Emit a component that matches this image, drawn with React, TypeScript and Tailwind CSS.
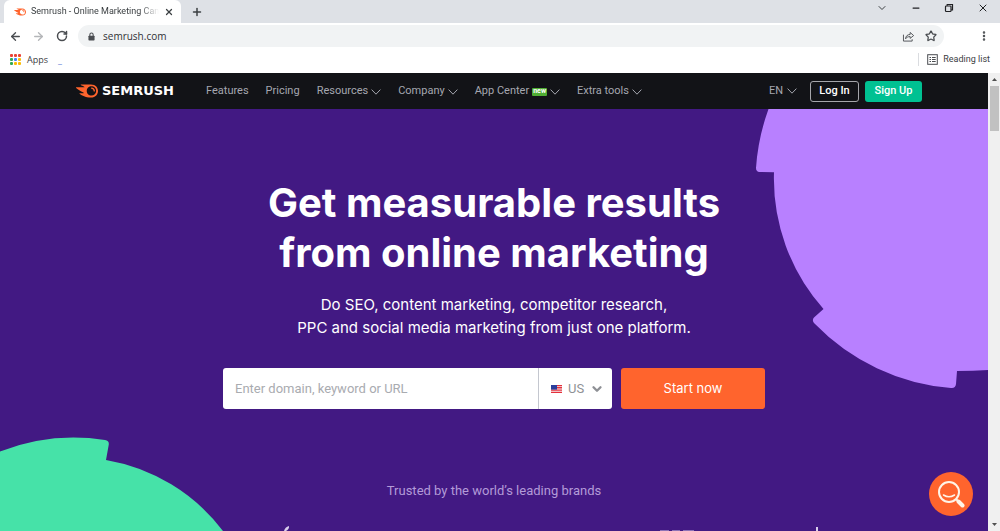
import {
  ArrowLeft,
  ArrowRight,
  ChevronDown,
  EllipsisVertical,
  Minus,
  Plus,
  RotateCw,
  Star,
  X,
} from "lucide-react";
import { SiSemrush } from "react-icons/si";

const navLinks = [
  { href: "#features", label: "Features" },
  { href: "#pricing", label: "Pricing" },
  { href: "#resources", label: "Resources", menu: true },
  { href: "#company", label: "Company", menu: true },
  { href: "#apps", label: "App Center", menu: true, isNew: true },
  { href: "#tools", label: "Extra tools", menu: true },
];

const appDots = [
  "bg-[#ea4335]", "bg-[#ea4335]", "bg-[#ea4335]",
  "bg-[#34a853]", "bg-[#4285f4]", "bg-[#fbbc05]",
  "bg-[#34a853]", "bg-[#fbbc05]", "bg-[#fbbc05]",
];

function Caret() {
  return (
    <svg viewBox="0 0 10 6" className="h-[6px] w-[10px]" fill="none" stroke="currentColor">
      <path d="M.6.6 5 5.2 9.4.6" />
    </svg>
  );
}

function TabStrip() {
  return (
    <div className="flex h-[23px] items-end justify-between bg-[#dee1e6]">
      <div className="flex h-full items-center">
        <div className="ml-1 flex h-full w-[177px] items-center rounded-t-md bg-white pr-2 pl-[10px]">
          <SiSemrush className="h-3 w-3 shrink-0 text-[#ff642d]" />
          <span className="ml-[5px] w-[129px] mask-r-from-85% font-['Roboto',sans-serif] text-[9px] whitespace-nowrap text-[#3c4043]">
            Semrush - Online Marketing Can
          </span>
          <button type="button" aria-label="Close tab" className="ml-[5px]">
            <X className="h-[10px] w-[10px] text-[#3c4043]" strokeWidth={3} />
          </button>
        </div>
        <button type="button" aria-label="New tab" className="ml-[10px]">
          <Plus className="h-3 w-3 text-[#3c4043]" strokeWidth={3} />
        </button>
      </div>
      <div className="flex h-4 items-center gap-[23px] self-start pr-[11px] text-[#202124]">
        <button type="button" aria-label="Search tabs">
          <ChevronDown className="h-3 w-3 text-[#3c4043]" />
        </button>
        <button type="button" aria-label="Minimize">
          <Minus className="h-[10px] w-[10px]" strokeWidth={3} />
        </button>
        <button type="button" aria-label="Restore">
          <svg viewBox="0 0 10 10" className="h-[10px] w-[10px]" fill="none" stroke="currentColor" strokeWidth="1.2">
            <rect x="1.5" y="3" width="5.5" height="5.5" rx=".8" />
            <path d="M3.2 2.8V1.5h5.3v5.3H7.2" />
          </svg>
        </button>
        <button type="button" aria-label="Close window">
          <X className="h-3 w-3 text-[#202124]" />
        </button>
      </div>
    </div>
  );
}

function Toolbar() {
  return (
    <div className="flex h-[26px] items-center bg-white pr-[10px] pl-[9px] text-[#4a4d51]">
      <button type="button" aria-label="Back">
        <ArrowLeft className="h-[13px] w-[13px]" strokeWidth={2.5} />
      </button>
      <button type="button" aria-label="Forward" className="ml-[10px] text-[#b4b6b9]">
        <ArrowRight className="h-[13px] w-[13px]" strokeWidth={2.5} />
      </button>
      <button type="button" aria-label="Reload" className="ml-[11px]">
        <RotateCw className="h-3 w-3" strokeWidth={3} />
      </button>
      <div className="ml-[10px] flex h-[22px] flex-1 items-center rounded-full bg-[#f1f3f4] pr-[7px] pl-[10px]">
        <svg viewBox="0 0 8 10" className="h-[9px] w-[7px]">
          <rect x=".5" y="4" width="7" height="5.6" rx=".8" fill="currentColor" />
          <path d="M2.1 4.3V2.9a1.9 1.9 0 0 1 3.8 0v1.4" fill="none" stroke="currentColor" strokeWidth="1.2" />
        </svg>
        <input
          type="text"
          aria-label="Address"
          defaultValue="semrush.com"
          className="ml-2 min-w-0 flex-1 bg-transparent text-[10px] text-[#303134] outline-none"
        />
        <button type="button" aria-label="Share">
          <svg viewBox="0 0 14 12" className="h-[11px] w-[13px]" fill="none" stroke="currentColor">
            <path d="M1.5 4v7h9.5V9" />
            <path d="M3.8 8.5c.2-3 2-4.6 5-4.7V1.6L12.6 5 8.8 8V6.1c-2.2 0-3.8.6-5 2.4Z" strokeLinejoin="round" />
          </svg>
        </button>
        <button type="button" aria-label="Bookmark" className="ml-[10px]">
          <Star className="h-3 w-3" strokeWidth={2.5} />
        </button>
      </div>
      <button type="button" aria-label="Browser menu" className="ml-[34px]">
        <EllipsisVertical className="h-3 w-3" strokeWidth={3} />
      </button>
    </div>
  );
}

function BookmarksBar() {
  return (
    <div className="flex h-6 items-center justify-between bg-white px-[10px] pb-[3px] text-[9px] text-[#3c4043]">
      <div className="flex items-center">
        <a href="#apps-page" className="flex items-center gap-[6px]">
          <span className="grid grid-cols-3 gap-px">
            {appDots.map((color, i) => (
              <span key={i} className={`h-[3px] w-[3px] rounded-[1px] ${color}`} />
            ))}
          </span>
          Apps
        </a>
        <span className="ml-[10px] text-[#5b7fd6]">_</span>
      </div>
      <button type="button" className="flex items-center gap-[5px] border-l border-[#dadce0] pl-2 font-['Roboto',sans-serif]">
        <svg viewBox="0 0 11 11" className="h-[11px] w-[11px]" fill="none" stroke="#4a4d51">
          <rect x=".7" y=".7" width="9.6" height="9.6" />
          <path d="M2.5 3.5H4M5 3.5h3.7M2.5 5.5H4M5 5.5h3.7M2.5 7.5H4M5 7.5h3.7" />
        </svg>
        Reading list
      </button>
    </div>
  );
}

function SiteHeader() {
  return (
    <header className="h-9 shrink-0 bg-[#121317] font-['Roboto',sans-serif] text-[11px] text-[#a5a7b0]">
      <div className="mx-auto flex h-full max-w-[856px] items-center pl-[10px]">
        <a href="#home" className="flex items-center gap-1">
          <SiSemrush className="h-[22px] w-[22px] text-[#ff642d]" />
          <span className="font-['DejaVu_Sans',sans-serif] text-[13px] leading-4 font-bold text-white">
            SEMRUSH
          </span>
        </a>
        <nav className="ml-8 flex items-center gap-[17px] pt-px">
          {navLinks.map(({ href, label, menu, isNew }) => (
            <a key={href} href={href} className="flex items-center whitespace-nowrap hover:text-white">
              {label}
              {isNew && (
                <span className="ml-[3px] h-2 rounded-[1px] bg-[#4fae33] px-[1px] text-[7px] leading-[7px] font-bold text-white">
                  new
                </span>
              )}
              {menu && (
                <span className="ml-[3px]">
                  <Caret />
                </span>
              )}
            </a>
          ))}
        </nav>
        <div className="ml-auto flex items-center">
          <button type="button" className="flex items-center gap-1">
            EN
            <Caret />
          </button>
          <a
            href="#login"
            className="ml-[13px] flex h-[21px] w-[49px] items-center justify-center rounded-[3px] border border-[#a5a6ab] font-medium text-white"
          >
            Log In
          </a>
          <a
            href="#signup"
            className="ml-[6px] flex h-[21px] w-[57px] items-center justify-center rounded-[3px] bg-[#00c192] font-medium text-white"
          >
            Sign Up
          </a>
        </div>
      </div>
    </header>
  );
}

function UsFlag() {
  return (
    <svg viewBox="0 0 11 8" className="h-2 w-[11px]">
      <path fill="#f4f4f4" d="M0 0h11v8H0z" />
      <path stroke="#e5303c" strokeWidth="1.4" d="M0 .5h11M0 2.8h11M0 5.1h11M0 7.4h11" />
      <path fill="#2b3f9c" d="M0 0h6v4.6H0z" />
    </svg>
  );
}

function SearchForm() {
  return (
    <form
      className="mt-[29px] flex w-full max-w-[542px] gap-[9px] font-['Roboto',sans-serif]"
      onSubmit={(e) => e.preventDefault()}
    >
      <div className="flex h-[41px] flex-1 rounded-[3px] bg-white">
        <input
          type="text"
          aria-label="Domain, keyword or URL"
          placeholder="Enter domain, keyword or URL"
          className="min-w-0 flex-1 px-3 text-[13px] text-[#333] outline-none placeholder:text-[#a9abb0]"
        />
        <label className="relative flex w-[74px] items-center border-l border-[#c4c7cf]">
          <span className="pointer-events-none absolute left-3">
            <UsFlag />
          </span>
          <select
            aria-label="Country"
            className="h-full w-full appearance-none pl-[29px] text-[13px] text-[#8e9095] outline-none"
          >
            <option>US</option>
          </select>
          <ChevronDown
            className="pointer-events-none absolute right-2 h-[14px] w-[14px] text-[#8e9095]"
            strokeWidth={4}
          />
        </label>
      </div>
      <button type="submit" className="w-36 rounded-[3px] bg-[#ff642d] font-['Inter',sans-serif] text-[13px] text-white">
        Start now
      </button>
    </form>
  );
}

function Hero() {
  return (
    <main className="relative flex flex-1 flex-col items-center overflow-hidden bg-[#421983] pt-[69px] text-white">
      <svg viewBox="0 0 233 283" className="absolute top-0 right-0 h-[283px] w-[233px]" fill="#b880ff">
        <path d="M13.5 0A214 214 0 0 0 1 59Q1 62.7 4.5 63L19 63.3A196 196 0 0 0 68.5 200L59 208.5Q56.5 211.5 59.5 214.5A214 214 0 0 0 196 279Q200.5 279.5 201 275L202 262Q218 262 233 261V0Z" />
      </svg>
      <svg viewBox="0 0 224 94" className="absolute bottom-0 left-0 h-[94px] w-[224px]" fill="#46e2a8">
        <path d="M0 14.5A204 204 0 0 1 105 3Q109.5 3.5 108.7 8L106 23A186 186 0 0 1 223 94H0Z" />
      </svg>

      <h1 className="relative text-center font-['Inter',sans-serif] text-[40px] leading-[50px] font-bold">
        Get measurable results
        <br />
        from online marketing
      </h1>
      <p className="relative mt-[15px] text-center text-[15px] leading-[23px]">
        Do SEO, content marketing, competitor research,
        <br />
        PPC and social media marketing from just one platform.
      </p>
      <SearchForm />
      <p className="mt-[74px] font-['Roboto',sans-serif] text-[13px] leading-4 text-[#b39bd8]">
        Trusted by the world’s leading brands
      </p>

      {/* tops of the brand logos, the rest is below the fold */}
      <svg viewBox="0 0 680 5" className="absolute bottom-0 h-[5px] w-[680px]" fill="#d9cdec">
        <path d="M130 5Q131 1 135 0Q135.500 3 132 5Z" />
        <path d="M506 4h9v1h-9zM518 4h8v1h-8zM529 4h11v1h-11z" opacity=".5" />
        <path d="M662 1h2v4h-2z" />
      </svg>

      <button
        type="button"
        aria-label="Open help chat"
        className="absolute right-[15px] bottom-[15px] flex h-11 w-11 items-center justify-center rounded-full bg-[#ff642d]"
      >
        <svg viewBox="0 0 28 28" className="h-7 w-7" fill="none" stroke="#fff4e8" strokeLinecap="round">
          <circle cx="12" cy="12" r="10" strokeWidth="2" />
          <path d="m19.5 19.5 2 2" strokeWidth="2" />
          <path d="m21.5 21.5 4 4" strokeWidth="4" />
          <path d="M6.5 15q5.500 3.500 11 0" strokeWidth="1.5" />
        </svg>
      </button>
    </main>
  );
}

function Scrollbar() {
  return (
    <div className="flex w-3 shrink-0 flex-col items-center justify-between bg-[#f0f0f0] py-1">
      <div className="flex flex-col items-center gap-1">
        <svg viewBox="0 0 5 5" className="h-[5px] w-[5px]" fill="#505050">
          <path d="M0 4 2.5 1 5 4Z" />
        </svg>
        <div className="h-[45px] w-[9px] bg-[#c1c1c1]" />
      </div>
      <svg viewBox="0 0 5 5" className="h-[5px] w-[5px]" fill="#505050">
        <path d="M0 1 2.5 4 5 1Z" />
      </svg>
    </div>
  );
}

export default function App() {
  return (
    <div className="flex h-screen flex-col overflow-hidden font-['Open_Sans',sans-serif]">
      <TabStrip />
      <Toolbar />
      <BookmarksBar />
      <div className="flex min-h-0 flex-1">
        <div className="flex min-w-0 flex-1 flex-col font-['Inter',sans-serif]">
          <SiteHeader />
          <Hero />
        </div>
        <Scrollbar />
      </div>
    </div>
  );
}
